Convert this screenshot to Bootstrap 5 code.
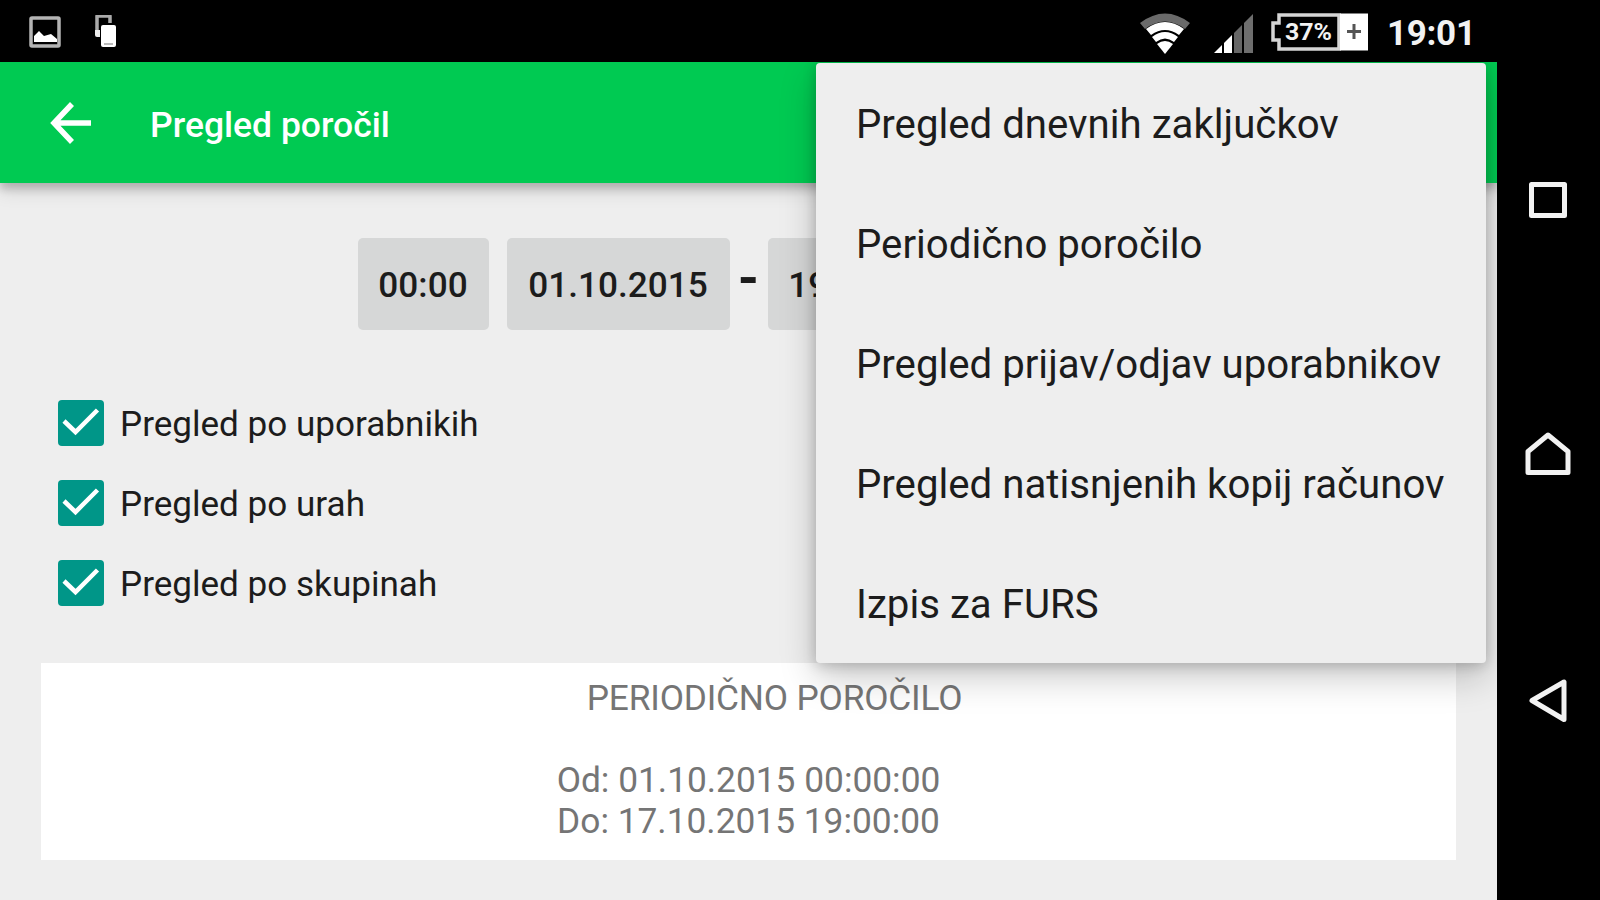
<!DOCTYPE html>
<html lang="sl">
<head>
    <meta charset="UTF-8">
    <meta name="viewport" content="width=device-width, initial-scale=1.0">
    <title>Pregled poročil</title>
    <link href="https://cdn.jsdelivr.net/npm/bootstrap@5.3.0/dist/css/bootstrap.min.css" rel="stylesheet">
    <style>
        body {
            background-color: #000;
            font-family: Roboto, "Noto Sans", sans-serif;
            color: #1c1c1c;
        }
        svg {
            display: block;
            flex: none;
        }
        .status-bar {
            height: 62px;
            padding-top: 2px;
            padding-left: 29px;
            padding-right: 127px;
            color: #f2f2f2;
        }
        .signal-icons {
            padding-top: 4px;
        }
        .clock {
            font-size: 35px;
            line-height: 58px;
            font-weight: 700;
            width: 86px;
            margin-left: 17px;
            padding-top: 4px;
            white-space: nowrap;
            letter-spacing: -.3px;
        }
        .app-screen {
            width: 1497px;
            background-color: #eee;
        }
        .app-bar {
            height: 121px;
            padding-top: 1px;
            padding-left: 50px;
            background-color: #00ca52;
            box-shadow: 0 6px 8px rgba(0, 0, 0, .18), 0 8px 18px rgba(0, 0, 0, .12);
        }
        .app-title {
            font-size: 35.5px;
            font-weight: 500;
            margin-left: 58px;
            padding-top: 5px;
        }
        .period-row {
            padding-top: 55px;
        }
        .btn-time {
            --bs-btn-bg: #d6d7d7;
            --bs-btn-color: #1c1c1c;
            --bs-btn-border-width: 0;
            --bs-btn-border-radius: 5px;
            --bs-btn-font-size: 35.2px;
            --bs-btn-font-weight: 500;
            --bs-btn-padding-x: 0;
            --bs-btn-padding-y: 0;
            width: 131px;
            height: 92px;
            margin-right: 18px;
            padding-top: 2px;
        }
        .btn-date {
            width: 223px;
            margin-right: 0;
        }
        .dash {
            width: 38px;
            font-size: 54px;
            font-weight: 700;
            line-height: 80px;
        }
        .option-list {
            padding: 69px 0 0 58px;
            gap: 32px;
            font-size: 35.1px;
            line-height: 45px;
        }
        .option-list span {
            padding-top: 3px;
        }
        .report {
            width: 1415px;
            height: 197px;
            margin: 56px 0 0 41px;
            padding-top: 15px;
            font-size: 35.3px;
            line-height: 41px;
            color: #757575;
        }
        .report-title {
            padding-left: 52px;
            letter-spacing: -.2px;
        }
        .overflow-menu {
            position: absolute;
            top: 1px;
            left: 816px;
            width: 670px;
            height: 600px;
            background-color: #eee;
            border-radius: 4px;
            font-size: 40.2px;
            box-shadow: 0 14px 36px rgba(0, 0, 0, .22), 0 2px 14px rgba(0, 0, 0, .2);
        }
        .overflow-menu a {
            height: 120px;
            padding: 5px 0 0 40px;
            color: #1c1c1c;
            white-space: nowrap;
        }
        .nav-keys {
            width: 103px;
            padding-top: 120px;
        }
    </style>
</head>
<body class="vh-100 overflow-hidden d-flex flex-column">

<!-- Status bar -->
<div class="status-bar d-flex align-items-center">
    <svg width="33" height="33" viewBox="0 0 33 33">
        <rect x="2" y="2" width="28" height="28" rx="1" fill="none" stroke="#b4b4b4" stroke-width="3.5"/>
        <path d="M5 26V20L10 15L15 20L22 18L28 23V26Z" fill="#fff"/>
    </svg>
    <svg class="ms-4 me-auto" width="40" height="34" viewBox="-7 1 40 34">
        <path d="M4 19V2H17V9" fill="none" stroke="#aaa" stroke-width="3.5" stroke-linejoin="round"/>
        <path d="M2 16H7V23H4Q2 23 2 21Z" fill="#eee"/>
        <rect x="8" y="11" width="15" height="22" rx="2" fill="#fff"/>
        <path d="M11 30H20" stroke="#bbb" stroke-width="2"/>
    </svg>

    <div class="signal-icons d-flex align-items-center gap-4">
        <svg width="50" height="42" viewBox="0 0 50 42">
            <path d="M0 10Q25 -9 50 10L45 16Q25 1 5 16Z" fill="#6a6a6a"/>
            <path d="M6 16Q25 2 44 16L39 22Q25 12 11 22Z" fill="#fff"/>
            <path d="M12 24Q25 14 38 24L34 29Q25 22 16 29Z" fill="#fff"/>
            <path d="M17 31Q25 25 33 31L25 41Z" fill="#fff"/>
        </svg>
        <svg width="40" height="40" viewBox="0 0 40 40">
            <path d="M0 39L8 31V39Z" fill="#fff"/>
            <path d="M10 39V29L18 21V39Z" fill="#fff"/>
            <path d="M20 39V19L28 11V39Z" fill="#666"/>
            <path d="M30 39V9L39 0V39Z" fill="#6e6e6e"/>
        </svg>
    </div>
    <svg class="ms-3" width="100" height="38" viewBox="0 0 100 38">
        <path d="M69 2H9V10H3V27H9V36H69Z" fill="none" stroke="#d5d5d5" stroke-width="3.5"/>
        <path d="M70 0.500H98V37.500H70Z" fill="#fff"/>
        <path d="M84 11V26M77 18.500H91" stroke="#555" stroke-width="3"/>
        <text x="15" y="27" font-size="24" font-weight="700" fill="#f2f2f2" textLength="47" lengthAdjust="spacingAndGlyphs">37%</text>
    </svg>
    <div class="clock">19:01</div>
</div>

<div class="d-flex flex-grow-1">
    <!-- Application -->
    <main class="app-screen position-relative overflow-hidden">
        <header class="app-bar d-flex align-items-center text-white">
            <svg width="42" height="42" viewBox="0 0 42 42">
                <path d="M22 2L4 21L22 40M4 21H41" fill="none" stroke="#fff" stroke-width="5.500"/>
            </svg>
            <div class="app-title">Pregled poročil</div>
        </header>

        <div class="period-row d-flex justify-content-center">
            <button type="button" class="btn btn-time">00:00</button>
            <button type="button" class="btn btn-time btn-date">01.10.2015</button>
            <div class="dash text-center">-</div>
            <button type="button" class="btn btn-time">19:00</button>
            <button type="button" class="btn btn-time btn-date">17.10.2015</button>
        </div>

        <div class="option-list d-flex flex-column">
            <div class="d-flex align-items-center gap-3">
                <svg width="46" height="46" viewBox="0 0 46 46">
                    <rect width="46" height="46" rx="4" fill="#009688"/>
                    <path d="M6 21L17.500 32L39.500 10" fill="none" stroke="#fff" stroke-width="4.500"/>
                </svg>
                <span>Pregled po uporabnikih</span>
            </div>
            <div class="d-flex align-items-center gap-3">
                <svg width="46" height="46" viewBox="0 0 46 46">
                    <rect width="46" height="46" rx="4" fill="#009688"/>
                    <path d="M6 21L17.500 32L39.500 10" fill="none" stroke="#fff" stroke-width="4.500"/>
                </svg>
                <span>Pregled po urah</span>
            </div>
            <div class="d-flex align-items-center gap-3">
                <svg width="46" height="46" viewBox="0 0 46 46">
                    <rect width="46" height="46" rx="4" fill="#009688"/>
                    <path d="M6 21L17.500 32L39.500 10" fill="none" stroke="#fff" stroke-width="4.500"/>
                </svg>
                <span>Pregled po skupinah</span>
            </div>
        </div>

        <section class="report bg-white text-center">
            <div class="report-title">PERIODIČNO POROČILO</div>
            <br>
            <div>Od: 01.10.2015 00:00:00</div>
            <div>Do: 17.10.2015 19:00:00</div>
        </section>

        <!-- Overflow menu, open over the page -->
        <nav class="overflow-menu d-flex flex-column">
            <a class="d-flex align-items-center text-decoration-none">Pregled dnevnih zaključkov</a>
            <a class="d-flex align-items-center text-decoration-none">Periodično poročilo</a>
            <a class="d-flex align-items-center text-decoration-none">Pregled prijav/odjav uporabnikov</a>
            <a class="d-flex align-items-center text-decoration-none">Pregled natisnjenih kopij računov</a>
            <a class="d-flex align-items-center text-decoration-none">Izpis za FURS</a>
        </nav>
    </main>

    <!-- Android navigation keys -->
    <aside class="nav-keys">
        <svg width="103" height="545" viewBox="0 0 103 545" fill="none" stroke="#f2f2f2" stroke-width="5" stroke-linejoin="round">
            <rect x="34.500" y="2.500" width="33" height="31"/>
            <path d="M51 253L71 269.500V290.500H31V269.500Z"/>
            <path d="M35 518.500L67 500V537.500Z"/>
        </svg>
    </aside>
</div>

<script src="https://cdn.jsdelivr.net/npm/bootstrap@5.3.0/dist/js/bootstrap.bundle.min.js"></script>
</body>
</html>
